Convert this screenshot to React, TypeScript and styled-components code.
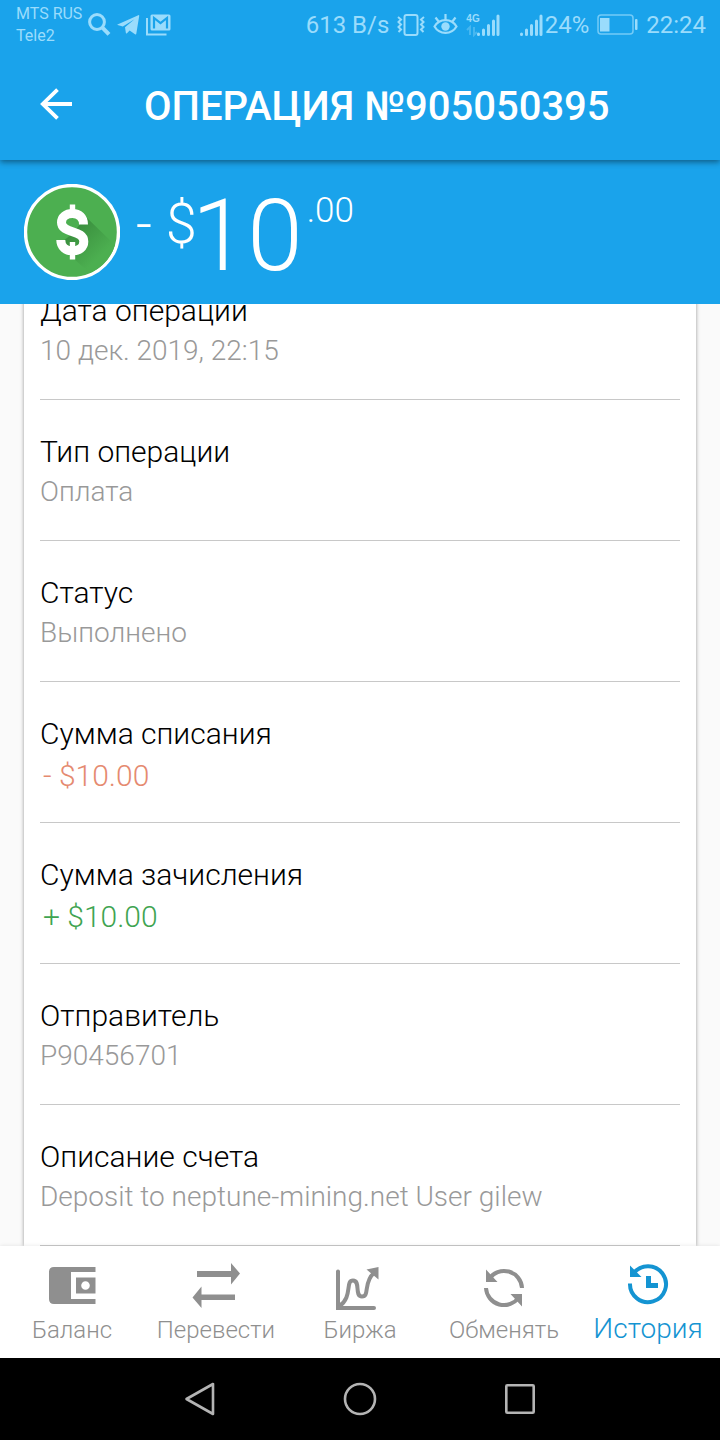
import React from "react";
import styled, { createGlobalStyle } from "styled-components";

const blue = "#1aa3eb";
const statusTint = "#9adcfc";

const GlobalStyle = createGlobalStyle`
  *, *::before, *::after { box-sizing: border-box; }
  body {
    margin: 0;
    background: #fafafa;
    font-family: Roboto, "Noto Sans", sans-serif;
    font-weight: 300;
  }
  svg { display: block; flex: none; }
`;

const Screen = styled.div`
  display: flex;
  flex-direction: column;
  height: 100vh;
  overflow: hidden;
`;

const Header = styled.header`
  position: relative;
  z-index: 1;
  flex: none;
  background: ${blue};
  box-shadow: 0 2px 6px rgba(0, 0, 0, 0.45);
`;

const StatusBar = styled.div`
  display: flex;
  align-items: center;
  justify-content: space-between;
  height: 50px;
  padding: 0 14px 0 16px;
  color: ${statusTint};
  font-size: 24px;
  font-weight: 400;
  line-height: 24px;
`;

const StatusGroup = styled.div<{ $gap: number }>`
  display: flex;
  align-items: center;
  gap: ${(p) => p.$gap}px;
  white-space: nowrap;
`;

const Carriers = styled.div`
  font-size: 16px;
  line-height: 22px;
`;

const Toolbar = styled.div`
  display: flex;
  align-items: center;
  height: 110px;
  padding: 0 32px 2px;
  gap: 64px;
`;

const BackButton = styled.button`
  display: flex;
  align-items: center;
  justify-content: center;
  width: 48px;
  height: 48px;
  padding: 0;
  border: 0;
  background: none;
  color: #fff;
`;

const Title = styled.h1`
  margin: 0;
  padding-top: 6px;
  color: #fff;
  font-size: 40px;
  font-weight: 500;
  line-height: 48px;
  white-space: nowrap;
`;

const Hero = styled.section`
  display: flex;
  flex: none;
  align-items: center;
  gap: 16px;
  height: 144px;
  padding: 0 24px;
  background: ${blue};
  color: #fff;
`;

const Amount = styled.div`
  display: flex;
  align-items: flex-start;
  height: 96px;
`;

const Currency = styled.span`
  margin-right: -5px;
  padding-top: 8px;
  font-size: 56px;
  line-height: 64px;
  white-space: pre;
`;

const Whole = styled.span`
  padding-top: 2px;
  font-size: 100px;
  line-height: 100px;
`;

const Cents = styled.span`
  padding: 9px 0 0 4px;
  font-size: 35px;
  line-height: 36px;
`;

/* The list stays scrolled to its last row, so the first one is cut at the top. */
const Details = styled.main`
  display: flex;
  flex: 1;
  flex-direction: column;
  justify-content: flex-end;
  min-height: 0;
  padding: 0 24px;
  overflow: hidden;
`;

const Card = styled.dl`
  flex: none;
  margin: 0;
  padding: 0 16px;
  background: #fff;
  box-shadow: 0 0 4px rgba(0, 0, 0, 0.4);
`;

const Row = styled.div`
  height: 141px;
  padding-top: 32px;
  border-bottom: 1px solid #c8c8c8;
`;

const Label = styled.dt`
  color: #000;
  font-size: 30px;
  line-height: 40px;
`;

type Tone = "plain" | "debit" | "credit";
const toneColor: Record<Tone, string> = { plain: "#999", debit: "#e58a70", credit: "#3fa451" };

const Value = styled.dd<{ $tone: Tone }>`
  margin: 0;
  padding-left: ${(p) => (p.$tone === "plain" ? 0 : 3)}px;
  color: ${(p) => toneColor[p.$tone]};
  font-size: ${(p) => (p.$tone === "plain" ? 28 : 30)}px;
  line-height: ${(p) => (p.$tone === "plain" ? 40 : 44)}px;
`;

const Tabs = styled.nav`
  display: grid;
  flex: none;
  grid-template-columns: repeat(5, 1fr);
  height: 112px;
  background: #fff;
  box-shadow: 0 0 4px rgba(0, 0, 0, 0.1);
  z-index: 1;
`;

const Tab = styled.a<{ $active: boolean }>`
  display: flex;
  flex-direction: column;
  align-items: center;
  padding-top: ${(p) => (p.$active ? 13 : 16)}px;
  gap: ${(p) => (p.$active ? 4 : 0)}px;
  color: ${(p) => (p.$active ? "#1494d2" : "#8f8f8f")};
  font-size: ${(p) => (p.$active ? 28 : 24)}px;
  line-height: ${(p) => (p.$active ? 36 : 40)}px;
  text-decoration: none;
`;

const SystemBar = styled.div`
  display: flex;
  flex: none;
  align-items: center;
  justify-content: center;
  height: 82px;
  background: #000;
`;

const SystemButton = styled.button`
  display: flex;
  align-items: center;
  justify-content: center;
  width: 160px;
  height: 80px;
  padding: 0;
  border: 0;
  background: none;
  color: #b4b4b4;
`;

const SearchIcon = () => (
  <svg width="23" height="24" viewBox="0 0 23 24" fill="none" stroke="currentColor">
    <circle cx="9" cy="9" r="7.4" strokeWidth="3" />
    <path d="M14.4 14.6L21 21.4" strokeWidth="4" />
  </svg>
);

const TelegramIcon = () => (
  <svg width="23" height="22" viewBox="0 0 23 22" fill="currentColor">
    <path d="M.5 10.5L21.3 1.2Q22.4.8 22.2 2L19.3 19.8Q19 21 18 20.3L12.6 16.4 10 19.2Q9 20 8.8 18.6L8 13.3 17.5 5.3 5.8 12.5 .6 11Q0 10.8 .5 10.5Z" />
  </svg>
);

const MailIcon = () => (
  <svg width="25" height="22" viewBox="0 0 25 22" fill="none" stroke="currentColor">
    <path d="M1 4V20.5H20.5" strokeWidth="2" />
    <rect x="4.5" y="0.5" width="20" height="16" rx="1.5" fill="currentColor" stroke="none" />
    <path d="M8 14.5V4L14.5 9 21 4V14.5" stroke={blue} strokeWidth="2.2" />
  </svg>
);

const VibrateIcon = () => (
  <svg width="28" height="24" viewBox="0 0 28 24" fill="none" stroke="currentColor" strokeWidth="2">
    <rect x="7.5" y="2" width="13" height="20" rx="2" />
    <path d="M1 4L4 6.5 1.5 9 4 11.5 1.5 14 4 16.5 1.5 19" />
    <path d="M27 4L24 6.5 26.5 9 24 11.5 26.5 14 24 16.5 26.5 19" />
  </svg>
);

const EyeIcon = () => (
  <svg width="25" height="24" viewBox="0 0 25 24" fill="none" stroke="currentColor" strokeWidth="2.2">
    <path d="M1.5 13.5C6.5 5 18.5 5 23.5 13.5 18.5 22 6.5 22 1.5 13.5Z" />
    <circle cx="12.5" cy="13.5" r="4.2" fill="currentColor" stroke="none" />
    <path d="M12.5 1V7M2.5 4.5L6 9M22.5 4.5L19 9" />
  </svg>
);

const SignalBars = () => (
  <svg width="24" height="24" viewBox="0 0 24 24" fill="none" stroke="currentColor" strokeWidth="3" strokeLinecap="round">
    <path d="M2.5 21V21.5M7.5 17V21.5M12.5 12.5V21.5M17.5 8V21.5M22 3V21.5" />
  </svg>
);

const MobileSignal = styled.div`
  display: flex;
  align-items: center;
  margin-right: 11px;
`;

const MobileBadge = styled.span`
  display: flex;
  flex-direction: column;
  margin-right: -4px;
  font-family: "Liberation Sans", sans-serif;
  font-size: 10px;
  font-weight: 700;
  line-height: 12px;
`;

const TrafficIcon = () => (
  <svg width="12" height="12" viewBox="0 0 12 12" fill="none" stroke="currentColor" strokeWidth="2" opacity="0.35">
    <path d="M4 10V2L1 5M8 2V10L11 7" />
  </svg>
);

const BatteryIcon = () => (
  <svg width="41" height="22" viewBox="0 0 41 22">
    <rect x="1" y="1" width="35" height="19" rx="3" fill="none" stroke="currentColor" strokeWidth="1.5" opacity="0.7" />
    <rect x="3" y="4" width="9.5" height="13.5" fill="currentColor" />
    <rect x="38" y="5" width="2.5" height="11" rx="1" fill="currentColor" />
  </svg>
);

const BackArrow = () => (
  <svg width="32" height="32" viewBox="0 0 32 32" fill="none" stroke="currentColor" strokeWidth="3.8">
    <path d="M32 16H3M17.5 1.6L2.8 16 17.5 30.4" />
  </svg>
);

const DollarCoin = () => (
  <svg width="96" height="96" viewBox="0 0 96 96" role="img" aria-label="USD">
    <defs>
      <linearGradient id="coinShade" x1="50" y1="45" x2="76" y2="72" gradientUnits="userSpaceOnUse">
        <stop offset="0" stopColor="#3a8f3e" />
        <stop offset="1" stopColor="#4caf50" />
      </linearGradient>
    </defs>
    <circle cx="48" cy="48" r="46.5" fill="#4caf50" stroke="#fff" strokeWidth="3.4" />
    <path d="M62 33L91 61A45 45 0 0 1 66 89L34 61 48 50Z" fill="url(#coinShade)" />
    <g fill="none" stroke="#fff">
      <path d="M59.5 40.5C59.5 33 55 29.5 48.5 29.5S37.5 33 37.5 38.5C37.5 50 59.8 45.5 59.8 57.5 59.8 63.5 55 66.8 48.5 66.8S36.8 63 36.8 56" strokeWidth="9" />
      <path d="M48.5 20.5V31M48.5 58V75.5" strokeWidth="5.4" />
    </g>
  </svg>
);

const WalletIcon = () => (
  <svg width="48" height="48" viewBox="0 0 48 48" fill="currentColor">
    <path fillRule="evenodd" d="M6 5H47.5V10H23V37H47.5V42H6Q1 42 1 37V10Q1 5 6 5ZM28 15.5H47.5V31.5H28ZM37.5 19.2A4.3 4.3 0 1 0 37.5 27.8 4.3 4.3 0 1 0 37.5 19.2Z" />
  </svg>
);

const TransferIcon = () => (
  <svg width="48" height="48" viewBox="0 0 48 48" fill="currentColor">
    <path d="M5 9H39V1L48 11.5 39 22.5V15H5ZM43 32.5H9.5V24.5L.5 35.5 9.5 46V38H43Z" />
  </svg>
);

const ExchangeIcon = () => (
  <svg width="48" height="48" viewBox="0 0 48 48" fill="none" stroke="currentColor" strokeWidth="4">
    <path d="M2 9.5V46H38" strokeLinecap="round" />
    <path d="M3 44.5C17 35 9 18.5 17 18.5S18 34.5 26 34.5 27 20 38 11" />
    <path d="M30.5 7.5L42.5 5V17.5Z" fill="currentColor" stroke="none" />
  </svg>
);

const SwapIcon = () => (
  <svg width="48" height="48" viewBox="0 0 48 48" fill="none" stroke="currentColor" strokeWidth="4">
    <path d="M9 17A18 18 0 0 1 42 26M6 26A18 18 0 0 0 39 35" />
    <path d="M6 7.5V20H17.5ZM42 44.5V32H30.5Z" fill="currentColor" stroke="none" />
  </svg>
);

const HistoryIcon = () => (
  <svg width="48" height="48" viewBox="0 0 48 48" fill="none" stroke="currentColor" strokeWidth="4">
    <path d="M9.5 14.5A18 18 0 1 1 6 24.5" />
    <path d="M6 6.5V18H17.5Z" fill="currentColor" stroke="none" />
    <path d="M24.5 17V26.5H34" strokeWidth="5" />
  </svg>
);

const rows: { label: string; value: string; tone: Tone }[] = [
  { label: "Дата операции", value: "10 дек. 2019, 22:15", tone: "plain" },
  { label: "Тип операции", value: "Оплата", tone: "plain" },
  { label: "Статус", value: "Выполнено", tone: "plain" },
  { label: "Сумма списания", value: "- $10.00", tone: "debit" },
  { label: "Сумма зачисления", value: "+ $10.00", tone: "credit" },
  { label: "Отправитель", value: "P90456701", tone: "plain" },
  { label: "Описание счета", value: "Deposit to neptune-mining.net User gilew", tone: "plain" },
];

const tabs = [
  { label: "Баланс", Icon: WalletIcon },
  { label: "Перевести", Icon: TransferIcon },
  { label: "Биржа", Icon: ExchangeIcon },
  { label: "Обменять", Icon: SwapIcon },
  { label: "История", Icon: HistoryIcon, active: true },
];

export default function App() {
  return (
    <Screen>
      <GlobalStyle />
      <Header>
        <StatusBar>
          <StatusGroup $gap={6}>
            <Carriers>
              <div>MTS RUS</div>
              <div>Tele2</div>
            </Carriers>
            <SearchIcon />
            <TelegramIcon />
            <MailIcon />
          </StatusGroup>
          <StatusGroup $gap={8}>
            <span>613 B/s</span>
            <VibrateIcon />
            <EyeIcon />
            <MobileSignal>
              <MobileBadge>
                4G
                <TrafficIcon />
              </MobileBadge>
              <SignalBars />
            </MobileSignal>
            <StatusGroup $gap={2}>
              <SignalBars />
              <span>24%</span>
            </StatusGroup>
            <StatusGroup $gap={8}>
              <BatteryIcon />
              <time>22:24</time>
            </StatusGroup>
          </StatusGroup>
        </StatusBar>
        <Toolbar>
          <BackButton type="button" aria-label="Назад">
            <BackArrow />
          </BackButton>
          <Title>ОПЕРАЦИЯ №905050395</Title>
        </Toolbar>
      </Header>
      <Hero>
        <DollarCoin />
        <Amount>
          <Currency>- $</Currency>
          <Whole>10</Whole>
          <Cents>.00</Cents>
        </Amount>
      </Hero>
      <Details>
        <Card>
          {rows.map((row) => (
            <Row key={row.label}>
              <Label>{row.label}</Label>
              <Value $tone={row.tone}>{row.value}</Value>
            </Row>
          ))}
        </Card>
      </Details>
      <Tabs>
        {tabs.map(({ label, Icon, active }) => (
          <Tab key={label} href="#" $active={Boolean(active)} aria-current={active ? "page" : undefined}>
            <Icon />
            {label}
          </Tab>
        ))}
      </Tabs>
      <SystemBar>
        <SystemButton type="button" aria-label="Назад">
          <svg width="32" height="36" viewBox="0 0 32 36" fill="none" stroke="currentColor" strokeWidth="2.6" strokeLinejoin="round">
            <path d="M2.5 18L29 3V33Z" />
          </svg>
        </SystemButton>
        <SystemButton type="button" aria-label="Домой">
          <svg width="36" height="36" viewBox="0 0 36 36" fill="none" stroke="currentColor" strokeWidth="2.6">
            <circle cx="18" cy="18" r="15" />
          </svg>
        </SystemButton>
        <SystemButton type="button" aria-label="Недавние">
          <svg width="32" height="32" viewBox="0 0 32 32" fill="none" stroke="currentColor" strokeWidth="2.6">
            <rect x="2.3" y="2.3" width="27.4" height="27.4" rx="1" />
          </svg>
        </SystemButton>
      </SystemBar>
    </Screen>
  );
}
